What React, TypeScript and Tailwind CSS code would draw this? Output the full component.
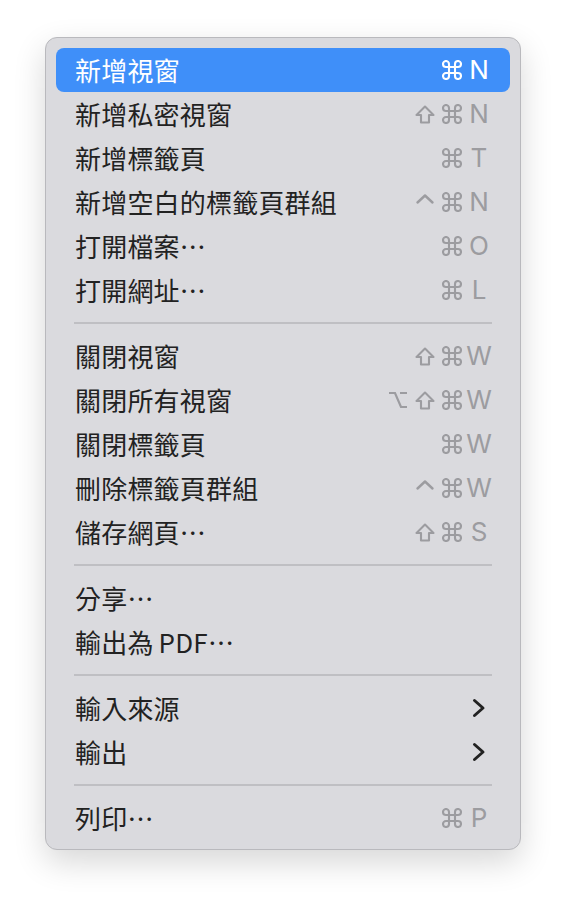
import React from "react";

type Mod = "opt" | "shift" | "ctrl" | "cmd";

type Item =
  | { kind: "item"; label: string; latin?: string; mods?: Mod[]; keyChar?: string; submenu?: boolean; active?: boolean }
  | { kind: "sep" };

const items: Item[] = [
  { kind: "item", label: "新增視窗", mods: ["cmd"], keyChar: "N", active: true },
  { kind: "item", label: "新增私密視窗", mods: ["shift", "cmd"], keyChar: "N" },
  { kind: "item", label: "新增標籤頁", mods: ["cmd"], keyChar: "T" },
  { kind: "item", label: "新增空白的標籤頁群組", mods: ["ctrl", "cmd"], keyChar: "N" },
  { kind: "item", label: "打開檔案…", mods: ["cmd"], keyChar: "O" },
  { kind: "item", label: "打開網址…", mods: ["cmd"], keyChar: "L" },
  { kind: "sep" },
  { kind: "item", label: "關閉視窗", mods: ["shift", "cmd"], keyChar: "W" },
  { kind: "item", label: "關閉所有視窗", mods: ["opt", "shift", "cmd"], keyChar: "W" },
  { kind: "item", label: "關閉標籤頁", mods: ["cmd"], keyChar: "W" },
  { kind: "item", label: "刪除標籤頁群組", mods: ["ctrl", "cmd"], keyChar: "W" },
  { kind: "item", label: "儲存網頁…", mods: ["shift", "cmd"], keyChar: "S" },
  { kind: "sep" },
  { kind: "item", label: "分享…" },
  { kind: "item", label: "輸出為", latin: "PDF…" },
  { kind: "sep" },
  { kind: "item", label: "輸入來源", submenu: true },
  { kind: "item", label: "輸出", submenu: true },
  { kind: "sep" },
  { kind: "item", label: "列印…", mods: ["cmd"], keyChar: "P" },
];

// modifier glyphs drawn as small strokes
const ModIcon = ({ mod }: { mod: Mod }) => {
  if (mod === "cmd")
    return (
      <svg width="20" height="20" viewBox="2 2 20 20" fill="none" stroke="currentColor" strokeWidth="2.1">
        <path d="M15 6v12a3 3 0 1 0 3-3H6a3 3 0 1 0 3 3V6a3 3 0 1 0-3 3h12a3 3 0 1 0-3-3" />
      </svg>
    );
  if (mod === "shift")
    return (
      <svg width="20" height="19" viewBox="0 0 20 19" fill="none" stroke="currentColor" strokeWidth="2.1" strokeLinejoin="round">
        <path d="M10 1.5L18.5 10H14V17.5H6V10H1.5Z" />
      </svg>
    );
  if (mod === "ctrl")
    return (
      <svg width="20" height="18" viewBox="0 0 20 18" fill="none" stroke="currentColor" strokeWidth="2.4" strokeLinecap="round" strokeLinejoin="round">
        <path d="M2.5 9.5L10 2.5L17.5 9.5" />
      </svg>
    );
  return (
    <svg width="20" height="18" viewBox="0 0 20 18" fill="none" stroke="currentColor" strokeWidth="2.2">
      <path d="M1 2H7L13 16H19M12 2H19" />
    </svg>
  );
};

const Chevron = () => (
  <svg width="14" height="20" viewBox="0 0 14 20" fill="none" stroke="currentColor" strokeWidth="3" strokeLinecap="round" strokeLinejoin="round">
    <path d="M2.5 2.5L11 10L2.5 17.5" />
  </svg>
);

const MenuRow = ({ item }: { item: Extract<Item, { kind: "item" }> }) => {
  const active = !!item.active;
  return (
    <div
      className={`flex h-[44px] items-center justify-between rounded-[8px] pl-[19px] pr-[18px] ${
        active ? "bg-[#3f8ff9] text-white" : "text-[#222222]"
      }`}
    >
      <span className="text-[26px] leading-none tracking-[0.2px]">
        {item.label}
        {item.latin && <span className="ml-[5px]">{item.latin}</span>}
      </span>
      {item.keyChar && (
        <div className={`flex items-center ${active ? "text-white" : "text-[#9c9ca0]"}`}>
          <div className="flex items-center gap-[7px]">
            {item.mods?.map((m, i) => (
              <ModIcon key={i} mod={m} />
            ))}
          </div>
          <span className="ml-[4px] w-[26px] text-center font-['Inter',sans-serif] text-[26px] leading-none">
            {item.keyChar}
          </span>
        </div>
      )}
      {item.submenu && (
        <div className="flex w-[26px] justify-center text-[#222222]">
          <Chevron />
        </div>
      )}
    </div>
  );
};

const App = () => {
  return (
    <div
      lang="zh-Hant"
      className="min-h-[904px] w-[566px] bg-white pl-[45px] pt-[37px] font-['Noto_Sans_CJK_TC','Noto_Sans',sans-serif]"
    >
      <div className="w-[476px] rounded-[12px] border border-[#b9b9bd] bg-[#dadade] px-[10px] pt-[10px] pb-[9px] shadow-[0_12px_32px_rgba(0,0,0,0.16)]">
        {items.map((item, i) =>
          item.kind === "sep" ? (
            <div key={i} className="flex h-[22px] items-center px-[18px]">
              <div className="h-[2px] w-full bg-[#bfbfc3]" />
            </div>
          ) : (
            <MenuRow key={i} item={item} />
          )
        )}
      </div>
    </div>
  );
};

export default App;
